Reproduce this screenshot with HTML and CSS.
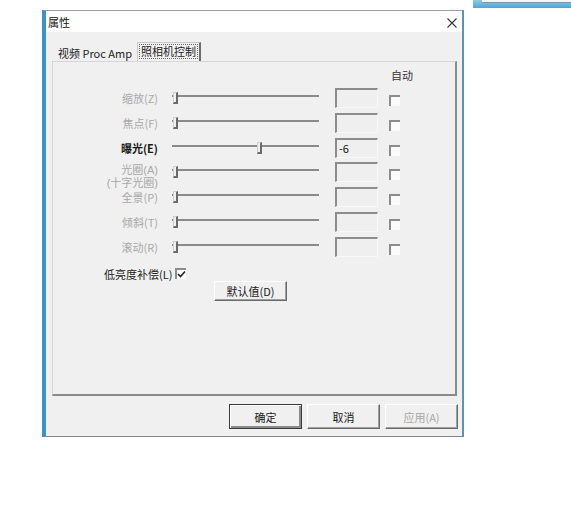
FILE: index.html
```html
<!DOCTYPE html>
<html lang="zh-CN">
<head>
  <meta charset="UTF-8" />
  <title>属性</title>
  <link rel="stylesheet" href="styles.css">
</head>
<body>
  <!-- edge of another window behind the dialog -->
  <div class="back-win"><div class="back-win-pane"></div></div>

  <div class="dialog">
    <div class="titlebar">
      <span class="title">属性</span>
      <svg class="close" width="10" height="10" viewBox="0 0 10 10">
        <path d="M0.5 0.5 L9.5 9.5 M9.5 0.5 L0.5 9.5" stroke="#333" stroke-width="1.1" fill="none" />
      </svg>
    </div>

    <div class="dlg-body">
      <div class="tabs">
        <span class="tab">视频 Proc Amp</span>
        <span class="tab active"><span class="focus">照相机控制</span></span>
      </div>

      <div class="panel">
        <div class="auto-head">自动</div>

        <div class="ctrl-grid">
          <span class="lbl">缩放(Z)</span>
          <div class="slider"><i class="thumb" style="left: 1px;"></i></div>
          <div class="edit"></div>
          <span class="chk"></span>

          <span class="lbl">焦点(F)</span>
          <div class="slider"><i class="thumb" style="left: 1px;"></i></div>
          <div class="edit"></div>
          <span class="chk"></span>

          <span class="lbl on">曝光(E)</span>
          <div class="slider"><i class="thumb" style="left: 85px;"></i></div>
          <div class="edit">-6</div>
          <span class="chk"></span>

          <span class="lbl two"><span>光圈(A)</span><span>(十字光圈)</span></span>
          <div class="slider"><i class="thumb" style="left: 1px;"></i></div>
          <div class="edit"></div>
          <span class="chk"></span>

          <span class="lbl">全景(P)</span>
          <div class="slider"><i class="thumb" style="left: 1px;"></i></div>
          <div class="edit"></div>
          <span class="chk"></span>

          <span class="lbl">倾斜(T)</span>
          <div class="slider"><i class="thumb" style="left: 1px;"></i></div>
          <div class="edit"></div>
          <span class="chk"></span>

          <span class="lbl">滚动(R)</span>
          <div class="slider"><i class="thumb" style="left: 1px;"></i></div>
          <div class="edit"></div>
          <span class="chk"></span>
        </div>

        <div class="lowlight">
          <span>低亮度补偿(L)</span>
          <span class="chk checked">
            <svg width="9" height="9" viewBox="0 0 9 9">
              <path d="M1 4 L3.5 6.5 L8 1.5" stroke="#222" stroke-width="1.6" fill="none" />
            </svg>
          </span>
        </div>

        <div class="default-row">
          <button class="btn">默认值(D)</button>
        </div>
      </div>

      <div class="btn-row">
        <button class="btn default">确定</button>
        <button class="btn">取消</button>
        <button class="btn disabled">应用(A)</button>
      </div>
    </div>
  </div>
</body>
</html>
```

FILE: styles.css
```css
* {
  box-sizing: border-box;
}

body {
  margin: 0;
  background-color: #ffffff;
  font-family: "Noto Sans CJK SC", "Noto Sans", sans-serif;
  font-size: 11px;
  color: #222;
  position: relative;
}

/* window peeking in at the top right */
.back-win {
  position: absolute;
  left: 473px;
  top: 0;
  width: 98px;
  height: 8px;
  background: linear-gradient(to bottom, #8ccbe8, #4aa6d2);
}

.back-win-pane {
  margin-left: 9px;
  height: 3px;
  background-color: #f4f6f7;
  border-bottom: 1px solid #7a98a8;
}

.dialog {
  margin: 10px 0 0 42px;
  width: 422px;
  height: 427px;
  border-top: 1px solid #9c9c9c;
  border-left: 4px solid #3e92cc;
  border-right: 2px solid #5d93ad;
  border-bottom: 1px solid #7d8a90;
  display: flex;
  flex-direction: column;
}

.titlebar {
  height: 21px;
  background-color: #ffffff;
  display: flex;
  align-items: center;
  justify-content: space-between;
  padding: 0 5px 0 2px;
}

.title {
  font-size: 11px;
  line-height: 14px;
  color: #111;
}

.close {
  margin-top: 2px;
}

.dlg-body {
  flex: 1;
  background-color: #f0f0f0;
  padding-top: 10px;
}

/* tabs */
.tabs {
  display: flex;
  align-items: flex-end;
  height: 19px;
  padding-left: 8px;
}

.tab {
  height: 16px;
  line-height: 16px;
  padding: 0 4px;
  color: #222;
}

.tab.active {
  margin-left: 1px;
  height: 19px;
  line-height: 15px;
  padding: 1px 1px 0 1px;
  border-top: 1px solid #c9c9c9;
  border-left: 1px solid #c9c9c9;
  border-right: 2px solid #6c6c6c;
}

.focus {
  display: block;
  border: 1px dotted #666;
  padding: 0 1px;
  line-height: 13px;
}

/* property page */
.panel {
  margin: 0 5px 0 6px;
  height: 335px;
  border-top: 1px solid #d6d6d6;
  border-left: 1px solid #d6d6d6;
  border-right: 2px solid #8a8a8a;
  border-bottom: 2px solid #8a8a8a;
}

.auto-head {
  padding: 7px 0 0 338px;
  line-height: 13px;
  color: #333;
}

.ctrl-grid {
  margin-top: 6px;
  display: grid;
  grid-template-columns: 105px 177px 43px 30px;
  grid-auto-rows: 20px;
  row-gap: 4.8px;
}

.lbl {
  align-self: center;
  text-align: right;
  line-height: 14px;
  color: #a8a8a8;
  white-space: nowrap;
}

.lbl.on {
  color: #1a1a1a;
  font-weight: 700;
}

/* two-line caption: the second line hangs below the row */
.lbl.two {
  align-self: start;
  padding-top: 2px;
  font-family: "Liberation Sans", "Noto Sans CJK SC", sans-serif;
}

.lbl.two span {
  display: block;
  height: 12.5px;
  line-height: 12.5px;
}

.slider {
  position: relative;
  margin-left: 14px;
  width: 147px;
  height: 20px;
}

.slider::before {
  content: "";
  display: block;
  margin-top: 7px;
  height: 2px;
  background-color: #8a8a8a;
}

.thumb {
  position: absolute;
  top: 4px;
  width: 5px;
  height: 12px;
  background-color: #f0f0f0;
  border-top: 1px solid #cfcfcf;
  border-left: 1px solid #cfcfcf;
  border-right: 2px solid #6a6a6a;
  border-bottom: 2px solid #6a6a6a;
}

.edit {
  width: 43px;
  height: 20px;
  background-color: #efefef;
  border-top: 2px solid #8c8c8c;
  border-left: 2px solid #8c8c8c;
  border-right: 1px solid #f7f7f7;
  border-bottom: 1px solid #f7f7f7;
  padding-left: 2px;
  line-height: 16px;
  color: #111;
}

.chk {
  display: block;
  width: 11px;
  height: 11px;
  background-color: #fbfbfb;
  border-top: 2px solid #8c8c8c;
  border-left: 2px solid #8c8c8c;
}

.ctrl-grid .chk {
  margin: 7px 0 0 11px;
}

.lowlight {
  margin-top: 10px;
  padding-left: 51px;
  display: flex;
  align-items: center;
  gap: 3px;
  height: 14px;
  line-height: 14px;
  color: #222;
}

.chk.checked {
  display: flex;
  align-items: center;
  justify-content: center;
}

.default-row {
  padding-left: 161px;
}

/* push buttons */
.btn {
  width: 73px;
  height: 20px;
  padding: 0;
  font-family: inherit;
  font-size: 11px;
  color: #1a1a1a;
  background-color: #f0f0f0;
  border-top: 1px solid #ffffff;
  border-left: 1px solid #ffffff;
  border-right: 1px solid #6a6a6a;
  border-bottom: 1px solid #6a6a6a;
  box-shadow: inset -1px -1px #a0a0a0;
}

.btn-row {
  margin-top: 8px;
  display: flex;
  justify-content: flex-end;
  gap: 5px;
  padding-right: 4px;
}

.btn-row .btn {
  height: 25px;
}

.btn.default {
  border: 1px solid #3a3a3a;
  box-shadow: inset 1px 1px #ffffff, inset -2px -2px #8a8a8a;
}

.btn.disabled {
  color: #a8a8a8;
}
```
